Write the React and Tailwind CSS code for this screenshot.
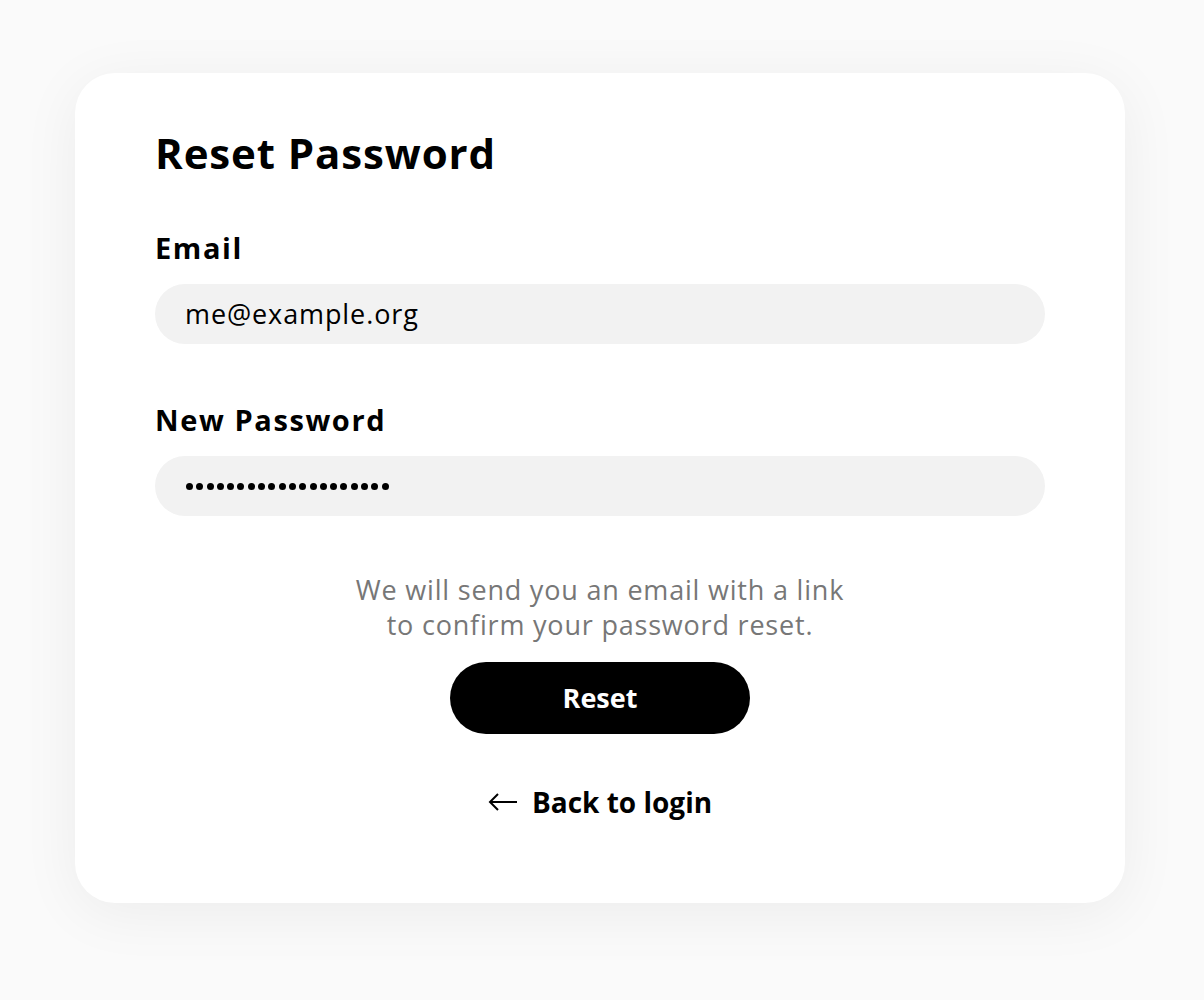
import React from "react";

export default function App() {
  const dots = Array.from({ length: 20 });
  return (
    <div
      className="min-h-[1000px] w-full bg-[#fafafa] pt-[73px] px-[75px]"
      style={{ fontFamily: "'Open Sans', 'Noto Sans', sans-serif" }}
    >
      <div className="w-[1050px] h-[830px] bg-white rounded-[40px] shadow-[0_10px_60px_rgba(0,0,0,0.06)] px-[80px] pt-[52px]">
        <h1 className="text-[42px] leading-[56px] font-bold text-black tracking-[0.9px]">Reset Password</h1>
        <div className="mt-[49px]">
          <label className="block text-[29px] leading-[36px] font-bold text-black tracking-[1.6px]">Email</label>
          <div className="mt-[18px] h-[60px] w-full rounded-full bg-[#f2f2f2] flex items-center px-[30px] text-[27px] text-black tracking-[0.9px]">
            me@example.org
          </div>
        </div>
        <div className="mt-[58px]">
          <label className="block text-[29px] leading-[36px] font-bold text-black tracking-[1.6px]">New Password</label>
          <div className="mt-[18px] h-[60px] w-full rounded-full bg-[#f2f2f2] flex items-center px-[31px]">
            <span className="flex items-center gap-[3.3px]" aria-label="password">
              {dots.map((_, i) => (
                <span key={i} className="block w-[7px] h-[7px] rounded-full bg-black" />
              ))}
            </span>
          </div>
        </div>
        <div className="mt-[56px] flex flex-col items-center">
          <p className="text-center text-[27px] leading-[35px] text-[#777777] tracking-[0.8px]">
            We will send you an email with a link
            <br />
            to confirm your password reset.
          </p>
          <button className="mt-[20px] w-[300px] h-[72px] rounded-full bg-black text-white text-[27px] font-bold">
            Reset
          </button>
          <a className="mt-[47px] flex items-center gap-[14px] text-[28px] font-bold text-black">
            <svg width="30" height="20" viewBox="0 0 30 20" fill="none" stroke="black" strokeWidth="2">
              <path d="M29 10H2M10 2L2 10L10 18" />
            </svg>
            Back to login
          </a>
        </div>
      </div>
    </div>
  );
}
